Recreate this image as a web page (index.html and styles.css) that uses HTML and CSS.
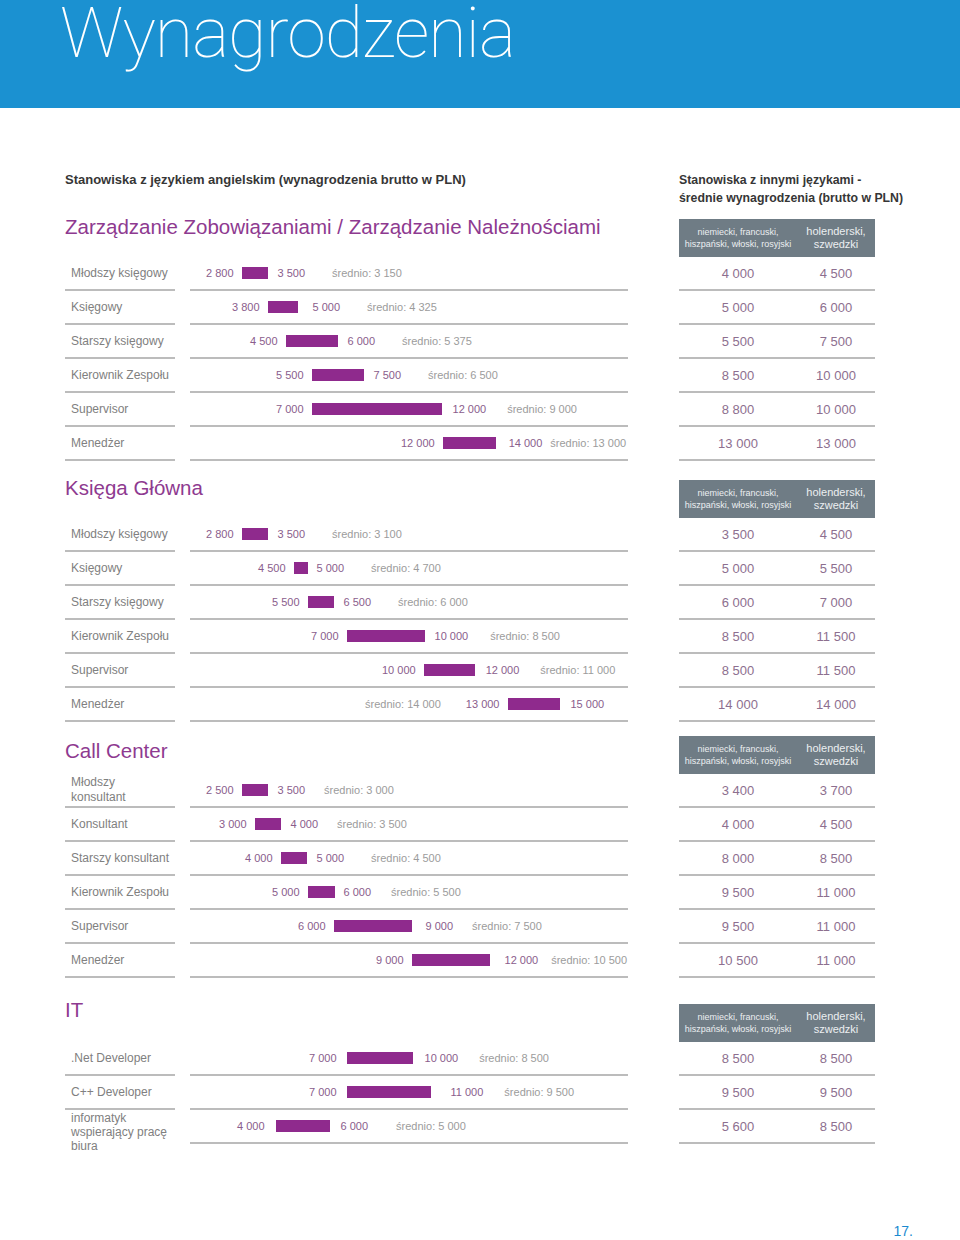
FILE: index.html
```html
<!DOCTYPE html>
<html lang="pl">
<head>
<meta charset="utf-8">
<title>Wynagrodzenia</title>
<link rel="stylesheet" href="styles.css">
</head>
<body>
<header class="hero"><h1>Wynagrodzenia</h1></header>
<main class="content">
  <div class="intro">
    <p class="sub sub-left">Stanowiska z językiem angielskim (wynagrodzenia brutto w PLN)</p>
    <p class="sub sub-right">Stanowiska z innymi językami -<br>średnie wynagrodzenia (brutto w PLN)</p>
  </div>

  <section class="sec sec-1">
    <div class="sec-head">
      <h2 class="sec-title">Zarządzanie Zobowiązaniami / Zarządzanie Należnościami</h2>
      <div class="langs"><span class="lang-a">niemiecki, francuski,<br>hiszpański, włoski, rosyjski</span><span class="lang-b">holenderski,<br>szwedzki</span></div>
    </div>
    <div class="row"><div class="label">Młodszy księgowy</div><div class="chart" style="padding-left:16px"><span class="num">2 800</span><i class="bar" style="width:26px"></i><span class="num">3 500</span><span class="avg">średnio: 3 150</span></div><div class="vals"><span class="val-a">4 000</span><span class="val-b">4 500</span></div></div>
    <div class="row"><div class="label">Księgowy</div><div class="chart" style="padding-left:42px"><span class="num">3 800</span><i class="bar" style="width:30px;margin-right:15px"></i><span class="num">5 000</span><span class="avg">średnio: 4 325</span></div><div class="vals"><span class="val-a">5 000</span><span class="val-b">6 000</span></div></div>
    <div class="row"><div class="label">Starszy księgowy</div><div class="chart" style="padding-left:60px"><span class="num">4 500</span><i class="bar" style="width:52px"></i><span class="num">6 000</span><span class="avg">średnio: 5 375</span></div><div class="vals"><span class="val-a">5 500</span><span class="val-b">7 500</span></div></div>
    <div class="row"><div class="label">Kierownik Zespołu</div><div class="chart" style="padding-left:86px"><span class="num">5 500</span><i class="bar" style="width:52px"></i><span class="num">7 500</span><span class="avg">średnio: 6 500</span></div><div class="vals"><span class="val-a">8 500</span><span class="val-b">10 000</span></div></div>
    <div class="row"><div class="label">Supervisor</div><div class="chart" style="padding-left:86px"><span class="num">7 000</span><i class="bar" style="width:130px;margin-right:11px"></i><span class="num">12 000</span><span class="avg" style="margin-left:21px">średnio: 9 000</span></div><div class="vals"><span class="val-a">8 800</span><span class="val-b">10 000</span></div></div>
    <div class="row"><div class="label">Menedżer</div><div class="chart" style="padding-left:211px"><span class="num">12 000</span><i class="bar" style="width:53px;margin-right:13px"></i><span class="num">14 000</span><span class="avg" style="margin-left:8px">średnio: 13 000</span></div><div class="vals"><span class="val-a">13 000</span><span class="val-b">13 000</span></div></div>
  </section>

  <section class="sec sec-2">
    <div class="sec-head">
      <h2 class="sec-title">Księga Główna</h2>
      <div class="langs"><span class="lang-a">niemiecki, francuski,<br>hiszpański, włoski, rosyjski</span><span class="lang-b">holenderski,<br>szwedzki</span></div>
    </div>
    <div class="row"><div class="label">Młodszy księgowy</div><div class="chart" style="padding-left:16px"><span class="num">2 800</span><i class="bar" style="width:26px"></i><span class="num">3 500</span><span class="avg">średnio: 3 100</span></div><div class="vals"><span class="val-a">3 500</span><span class="val-b">4 500</span></div></div>
    <div class="row"><div class="label">Księgowy</div><div class="chart" style="padding-left:68px"><span class="num">4 500</span><i class="bar" style="width:14px;margin-right:9px"></i><span class="num">5 000</span><span class="avg">średnio: 4 700</span></div><div class="vals"><span class="val-a">5 000</span><span class="val-b">5 500</span></div></div>
    <div class="row"><div class="label">Starszy księgowy</div><div class="chart" style="padding-left:82px"><span class="num">5 500</span><i class="bar" style="width:26px"></i><span class="num">6 500</span><span class="avg">średnio: 6 000</span></div><div class="vals"><span class="val-a">6 000</span><span class="val-b">7 000</span></div></div>
    <div class="row"><div class="label">Kierownik Zespołu</div><div class="chart" style="padding-left:121px"><span class="num">7 000</span><i class="bar" style="width:78px"></i><span class="num">10 000</span><span class="avg" style="margin-left:22px">średnio: 8 500</span></div><div class="vals"><span class="val-a">8 500</span><span class="val-b">11 500</span></div></div>
    <div class="row"><div class="label">Supervisor</div><div class="chart" style="padding-left:192px"><span class="num">10 000</span><i class="bar" style="width:51px;margin-right:11px"></i><span class="num">12 000</span><span class="avg" style="margin-left:21px">średnio: 11 000</span></div><div class="vals"><span class="val-a">8 500</span><span class="val-b">11 500</span></div></div>
    <div class="row"><div class="label">Menedżer</div><div class="chart" style="padding-left:175px"><span class="avg avg-first">średnio: 14 000</span><span class="num">13 000</span><i class="bar" style="width:52px;margin-right:11px"></i><span class="num">15 000</span></div><div class="vals"><span class="val-a">14 000</span><span class="val-b">14 000</span></div></div>
  </section>

  <section class="sec sec-3">
    <div class="sec-head">
      <h2 class="sec-title title-low">Call Center</h2>
      <div class="langs"><span class="lang-a">niemiecki, francuski,<br>hiszpański, włoski, rosyjski</span><span class="lang-b">holenderski,<br>szwedzki</span></div>
    </div>
    <div class="row"><div class="label">Młodszy<br>konsultant</div><div class="chart" style="padding-left:16px"><span class="num">2 500</span><i class="bar" style="width:26px"></i><span class="num">3 500</span><span class="avg" style="margin-left:19px">średnio: 3 000</span></div><div class="vals"><span class="val-a">3 400</span><span class="val-b">3 700</span></div></div>
    <div class="row"><div class="label">Konsultant</div><div class="chart" style="padding-left:29px"><span class="num">3 000</span><i class="bar" style="width:26px"></i><span class="num">4 000</span><span class="avg" style="margin-left:19px">średnio: 3 500</span></div><div class="vals"><span class="val-a">4 000</span><span class="val-b">4 500</span></div></div>
    <div class="row"><div class="label">Starszy konsultant</div><div class="chart" style="padding-left:55px"><span class="num">4 000</span><i class="bar" style="width:26px"></i><span class="num">5 000</span><span class="avg">średnio: 4 500</span></div><div class="vals"><span class="val-a">8 000</span><span class="val-b">8 500</span></div></div>
    <div class="row"><div class="label">Kierownik Zespołu</div><div class="chart" style="padding-left:82px"><span class="num">5 000</span><i class="bar" style="width:27px;margin-right:9px"></i><span class="num">6 000</span><span class="avg" style="margin-left:20px">średnio: 5 500</span></div><div class="vals"><span class="val-a">9 500</span><span class="val-b">11 000</span></div></div>
    <div class="row"><div class="label">Supervisor</div><div class="chart" style="padding-left:108px"><span class="num">6 000</span><i class="bar" style="width:78px;margin-right:14px"></i><span class="num">9 000</span><span class="avg" style="margin-left:19px">średnio: 7 500</span></div><div class="vals"><span class="val-a">9 500</span><span class="val-b">11 000</span></div></div>
    <div class="row"><div class="label">Menedżer</div><div class="chart" style="padding-left:186px"><span class="num">9 000</span><i class="bar" style="width:78px;margin-right:15px"></i><span class="num">12 000</span><span class="avg" style="margin-left:13px">średnio: 10 500</span></div><div class="vals"><span class="val-a">10 500</span><span class="val-b">11 000</span></div></div>
  </section>

  <section class="sec sec-4">
    <div class="sec-head">
      <h2 class="sec-title title-it">IT</h2>
      <div class="langs"><span class="lang-a">niemiecki, francuski,<br>hiszpański, włoski, rosyjski</span><span class="lang-b">holenderski,<br>szwedzki</span></div>
    </div>
    <div class="row"><div class="label">.Net Developer</div><div class="chart" style="padding-left:119px"><span class="num">7 000</span><i class="bar" style="width:66px;margin:0 12px 0 10px"></i><span class="num">10 000</span><span class="avg" style="margin-left:21px">średnio: 8 500</span></div><div class="vals"><span class="val-a">8 500</span><span class="val-b">8 500</span></div></div>
    <div class="row"><div class="label">C++ Developer</div><div class="chart" style="padding-left:119px"><span class="num">7 000</span><i class="bar" style="width:84px;margin:0 20px 0 10px"></i><span class="num">11 000</span><span class="avg" style="margin-left:21px">średnio: 9 500</span></div><div class="vals"><span class="val-a">9 500</span><span class="val-b">9 500</span></div></div>
    <div class="row"><div class="label label-open">informatyk<br>wspierający pracę<br>biura</div><div class="chart" style="padding-left:47px"><span class="num">4 000</span><i class="bar" style="width:54px;margin:0 11px 0 11px"></i><span class="num">6 000</span><span class="avg" style="margin-left:28px">średnio: 5 000</span></div><div class="vals"><span class="val-a">5 600</span><span class="val-b">8 500</span></div></div>
  </section>

  <footer class="folio">17.</footer>
</main>
</body>
</html>
```

FILE: styles.css
```css
* { box-sizing: border-box; }

body {
  margin: 0;
  background: #ffffff;
  font-family: "Liberation Sans", Arial, sans-serif;
}

.hero {
  height: 108px;
  background: #1b91d1;
  padding-left: 60px;
}

.hero h1 {
  margin: 0;
  font-family: Roboto, "Liberation Sans", sans-serif;
  font-weight: 100;
  font-size: 70px;
  line-height: 66px;
  letter-spacing: -1px;
  color: #ffffff;
}

.content {
  padding: 63px 0 0 65px;
}

.intro {
  display: flex;
}

.sub {
  margin: 0;
  font-weight: bold;
  line-height: 18px;
  color: #363636;
}

.sub-left {
  width: 614px;
  font-size: 13px;
}

.sub-right {
  font-size: 12.3px;
}

.sec-1 { margin-top: 12px; }
.sec-2 { margin-top: 19px; }
.sec-3 { margin-top: 14px; }
.sec-4 { margin-top: 26px; }

.sec-head {
  display: flex;
  align-items: flex-start;
}

.sec-title {
  width: 614px;
  margin: -5px 0 0;
  font-weight: normal;
  font-size: 20.5px;
  line-height: 26px;
  color: #8e3a90;
}

.title-low {
  margin-top: 2px;
}

.title-it {
  margin-top: -7px;
}

.langs {
  width: 196px;
  height: 38px;
  display: flex;
  align-items: center;
  background: #6f7c85;
  color: #eceff1;
}

.lang-a {
  width: 118px;
  text-align: center;
  font-size: 9px;
  line-height: 12px;
}

.lang-b {
  width: 78px;
  text-align: center;
  font-size: 11px;
  line-height: 13px;
}

.row {
  display: flex;
  height: 34px;
}

.label {
  width: 110px;
  padding-left: 6px;
  display: flex;
  align-items: center;
  border-bottom: 2px solid #bcbcbc;
  font-size: 12px;
  line-height: 15px;
  color: #808080;
}

.label-open {
  border-bottom: none;
  align-items: flex-start;
  padding-top: 1px;
  line-height: 14px;
  height: 48px;
}

.chart {
  width: 438px;
  margin-left: 15px;
  display: flex;
  align-items: center;
  border-bottom: 2px solid #bcbcbc;
  font-size: 11px;
  white-space: nowrap;
}

.num {
  color: #8a5d8c;
}

.bar {
  flex: none;
  height: 12px;
  margin: 0 10px 0 8px;
  background: #8f2a8d;
}

.avg {
  margin-left: 27px;
  color: #9c9c9c;
}

.avg-first {
  margin-left: 0;
  margin-right: 25px;
}

.vals {
  display: flex;
  align-items: center;
  margin-left: 51px;
  border-bottom: 2px solid #bcbcbc;
  font-size: 13px;
  color: #8d6f8f;
}

.val-a {
  width: 118px;
  text-align: center;
}

.val-b {
  width: 78px;
  text-align: center;
}

.folio {
  margin-top: 79px;
  padding-right: 47px;
  text-align: right;
  font-size: 14px;
  line-height: 16px;
  color: #1b8ad0;
}
```
